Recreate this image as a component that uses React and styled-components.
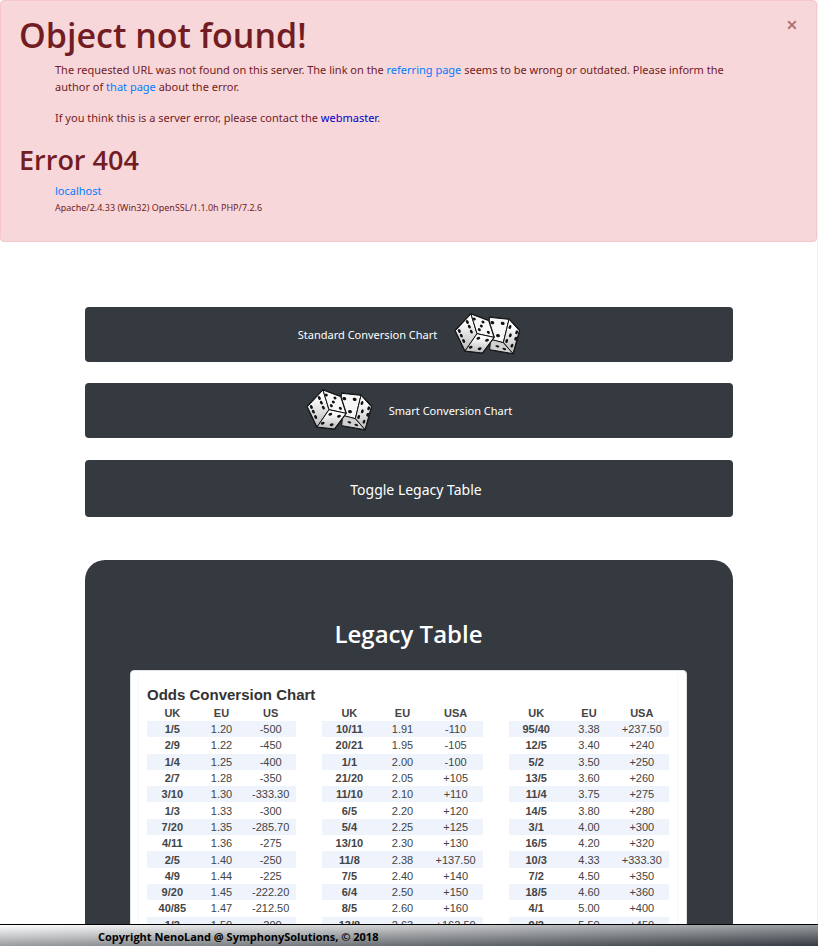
import React, { useState } from "react";
import styled, { createGlobalStyle, css } from "styled-components";

const headingFont = css`
  font-family: "Open Sans", "Noto Sans", sans-serif;
  font-weight: 600;
`;

const GlobalStyle = createGlobalStyle`
  *, *::before, *::after { box-sizing: border-box; }
  html { scrollbar-width: none; }
  body {
    margin: 0;
    background: #fff;
    color: #212529;
    font: 11px/17px "Noto Sans", "Open Sans", sans-serif;
  }
  button { font: inherit; color: inherit; cursor: pointer; }
`;

const Page = styled.div`
  border-right: 1px solid #f1f1f1;
  padding-bottom: 22px;
`;

const Alert = styled.section`
  position: relative;
  padding: 12px 64px 24px 18px;
  background: #f8d7da;
  border: 1px solid #f5c6cb;
  border-radius: 4px;
  color: #721c24;
`;

const AlertTitle = styled.h1`
  ${headingFont}
  margin: 0;
  font-size: 34px;
  line-height: 44px;
`;

const AlertSubtitle = styled.h2`
  ${headingFont}
  margin: 16px 0 4px;
  font-size: 27px;
  line-height: 36px;
`;

const AlertText = styled.p`
  margin: ${(p) => (p.$spaced ? "14px" : "4px")} 0 0;
  padding-left: 36px;
`;

const Signature = styled.small`
  display: block;
  padding-left: 36px;
  font-size: 9px;
  line-height: 18px;
`;

const Link = styled.a`
  color: ${(p) => (p.$dark ? "#0000cd" : "#007bff")};
  text-decoration: none;
`;

const CloseButton = styled.button`
  position: absolute;
  top: 11px;
  right: 11px;
  width: 26px;
  height: 26px;
  padding: 0;
  border: 0;
  background: none;
  color: #721c24;
  opacity: 0.55;
  font-size: 20px;
  font-weight: 600;
  line-height: 24px;
`;

const Container = styled.main`
  margin: 65px 84px 0 85px;
`;

const bar = css`
  display: flex;
  align-items: center;
  justify-content: center;
  width: 100%;
  border: 0;
  border-radius: 4px;
  background: #343a40;
  color: #fff;
`;

const ButtonStack = styled.div`
  display: grid;
  gap: 21px;
  margin-bottom: 22px;
`;

const ChartButton = styled.button`
  ${bar}
  height: 55px;
  gap: 17px;
  padding-bottom: 2px;
  flex-direction: ${(p) => (p.$iconFirst ? "row-reverse" : "row")};
`;

const ToggleButton = styled.button`
  ${bar}
  height: 57px;
  padding: 2px 0 0 14px;
  font-size: 14px;
`;

const DiceSvg = styled.svg`
  width: 66px;
  height: 44px;
  flex: none;
`;

const Panel = styled.section`
  margin-top: 43px;
  padding: 56px 46px 46px 45px;
  border-radius: 20px;
  background: #343a40;
`;

const PanelTitle = styled.h2`
  ${headingFont}
  margin: 0 0 18px;
  color: #fff;
  font-size: 24px;
  line-height: 36px;
  text-align: center;
`;

const Sheet = styled.div`
  padding: 4px 8px 4px 7px;
  border: 1px solid #dee2e6;
  border-radius: 4px;
  background: #fff;
`;

const SheetBody = styled.div`
  padding: 10px 8px 16px;
  border: solid #f7f7f7;
  border-width: 0 1px;
  color: #444;
  font-family: "Liberation Sans", Arial, sans-serif;
`;

const SheetTitle = styled.h3`
  margin: 0;
  color: #333;
  font-size: 15px;
  font-weight: 700;
  line-height: 20px;
`;

const Columns = styled.div`
  display: grid;
  grid-template-columns: 149fr 161fr 160fr;
  gap: 26px;
`;

const OddsTable = styled.table`
  width: 100%;
  height: 228px;
  border-collapse: collapse;
  table-layout: fixed;
  font-size: 11px;
  line-height: 16px;
  text-align: center;

  th, td { padding: 0; }
  tbody tr:nth-child(odd) { background: #eef3fc; }
`;

const Footer = styled.footer`
  position: fixed;
  inset: auto 0 0 0;
  height: 22px;
  padding-left: 98px;
  border-top: 1px solid #000;
  background: linear-gradient(to bottom right, #fff, #343a40);
  color: #000;
  font-family: "Open Sans", "Noto Sans", sans-serif;
  font-weight: 700;
  line-height: 23px;
`;

const TABLES = [
  {
    head: ["UK", "EU", "US"],
    rows: [
      ["1/5", "1.20", "-500"], ["2/9", "1.22", "-450"], ["1/4", "1.25", "-400"],
      ["2/7", "1.28", "-350"], ["3/10", "1.30", "-333.30"], ["1/3", "1.33", "-300"],
      ["7/20", "1.35", "-285.70"], ["4/11", "1.36", "-275"], ["2/5", "1.40", "-250"],
      ["4/9", "1.44", "-225"], ["9/20", "1.45", "-222.20"], ["40/85", "1.47", "-212.50"],
      ["1/2", "1.50", "-200"],
    ],
  },
  {
    head: ["UK", "EU", "USA"],
    rows: [
      ["10/11", "1.91", "-110"], ["20/21", "1.95", "-105"], ["1/1", "2.00", "-100"],
      ["21/20", "2.05", "+105"], ["11/10", "2.10", "+110"], ["6/5", "2.20", "+120"],
      ["5/4", "2.25", "+125"], ["13/10", "2.30", "+130"], ["11/8", "2.38", "+137.50"],
      ["7/5", "2.40", "+140"], ["6/4", "2.50", "+150"], ["8/5", "2.60", "+160"],
      ["13/8", "2.63", "+162.50"],
    ],
  },
  {
    head: ["UK", "EU", "USA"],
    rows: [
      ["95/40", "3.38", "+237.50"], ["12/5", "3.40", "+240"], ["5/2", "3.50", "+250"],
      ["13/5", "3.60", "+260"], ["11/4", "3.75", "+275"], ["14/5", "3.80", "+280"],
      ["3/1", "4.00", "+300"], ["16/5", "4.20", "+320"], ["10/3", "4.33", "+333.30"],
      ["7/2", "4.50", "+350"], ["18/5", "4.60", "+360"], ["4/1", "5.00", "+400"],
      ["9/2", "5.50", "+450"],
    ],
  },
];

/* Each pip: centre x, centre y, rotation in degrees, horizontal and vertical radius. */
const BACK_PIPS = [
  [130, 44, 10, 6, 5], [161, 46, 10, 6, 5], [147, 83, 10, 6, 5],
  [183, 57, 110, 6, 4], [203, 73, 110, 6, 4], [184, 82, 110, 6, 4],
  [173, 99, 110, 6, 4], [200, 92, 110, 6, 4], [189, 113, 110, 6, 4],
  [145, 115, 15, 6, 3], [166, 123, 15, 6, 3],
];

const FRONT_PIPS = [
  [55, 42, 60, 6, 4], [61, 56, 60, 6, 4], [67, 71, 60, 6, 4],
  [31, 69, 60, 6, 4], [37, 83, 60, 6, 4], [44, 99, 60, 6, 4],
  [76, 33, 40, 5, 4], [102, 42, 40, 5, 4], [97, 54, 40, 5, 4],
  [91, 65, 40, 5, 4], [118, 73, 40, 5, 4],
  [88, 91, -20, 6, 4], [114, 97, -20, 6, 4], [65, 118, -20, 6, 4], [92, 122, -20, 6, 4],
];

function Pips({ items }) {
  return items.map(([x, y, r, rx, ry]) => (
    <ellipse key={`${x}-${y}`} cx={x} cy={y} rx={rx} ry={ry} fill="#111" stroke="none" transform={`rotate(${r} ${x} ${y})`} />
  ));
}

function Dice() {
  return (
    <DiceSvg viewBox="15 12 198 132" aria-hidden="true">
      <defs>
        <linearGradient id="dice-face" x1="0" y1="0" x2="0" y2="1">
          <stop offset="0.2" stopColor="#fff" />
          <stop offset="1" stopColor="#b8b8b8" />
        </linearGradient>
      </defs>
      <g stroke="#111" strokeWidth="3" strokeLinejoin="round">
        <path d="M122 28L180 34L211 68L192 137L125 125Z" fill="#111" strokeWidth="5" />
        <path d="M122 28L180 34L163 104L112 92Z" fill="#f6f6f6" />
        <path d="M180 34L211 68L192 137L163 104Z" fill="url(#dice-face)" />
        <path d="M125 94L163 104L192 137L122 125Z" fill="#d0d0d0" />
        <Pips items={BACK_PIPS} />
        <path d="M66 18L119 38L135 88L100 135L48 129L19 68Z" fill="#111" strokeWidth="5" />
        <path d="M66 18L84 77L48 129L19 68Z" fill="url(#dice-face)" />
        <path d="M66 18L119 38L135 88L84 77Z" fill="#f8f8f8" />
        <path d="M84 77L135 88L100 135L48 129Z" fill="url(#dice-face)" />
        <Pips items={FRONT_PIPS} />
      </g>
    </DiceSvg>
  );
}

function Odds({ head, rows }) {
  return (
    <OddsTable>
      <colgroup>
        <col width="34%" />
        <col width="32%" />
        <col width="34%" />
      </colgroup>
      <thead>
        <tr>{head.map((h) => <th key={h} scope="col">{h}</th>)}</tr>
      </thead>
      <tbody>
        {rows.map(([uk, eu, us]) => (
          <tr key={uk}>
            <th scope="row">{uk}</th>
            <td>{eu}</td>
            <td>{us}</td>
          </tr>
        ))}
      </tbody>
    </OddsTable>
  );
}

export default function App() {
  const [alertOpen, setAlertOpen] = useState(true);
  const [tableOpen, setTableOpen] = useState(true);
  return (
    <>
      <GlobalStyle />
      <Page>
        {alertOpen && (
          <Alert role="alert">
            <CloseButton type="button" aria-label="Close" onClick={() => setAlertOpen(false)}>×</CloseButton>
            <AlertTitle>Object not found!</AlertTitle>
            <AlertText>
              The requested URL was not found on this server. The link on the{" "}
              <Link href="#referrer">referring page</Link> seems to be wrong or outdated. Please inform the
              author of <Link href="#page">that page</Link> about the error.
            </AlertText>
            <AlertText $spaced>
              If you think this is a server error, please contact the{" "}
              <Link $dark href="mailto:postmaster@localhost">webmaster</Link>.
            </AlertText>
            <AlertSubtitle>Error 404</AlertSubtitle>
            <AlertText><Link href="/">localhost</Link></AlertText>
            <Signature>Apache/2.4.33 (Win32) OpenSSL/1.1.0h PHP/7.2.6</Signature>
          </Alert>
        )}
        <Container>
          <ButtonStack>
            <ChartButton type="button">Standard Conversion Chart<Dice /></ChartButton>
            <ChartButton type="button" $iconFirst>Smart Conversion Chart<Dice /></ChartButton>
          </ButtonStack>
          <ToggleButton type="button" onClick={() => setTableOpen(!tableOpen)}>Toggle Legacy Table</ToggleButton>
          {tableOpen && (
            <Panel>
              <PanelTitle>Legacy Table</PanelTitle>
              <Sheet>
                <SheetBody>
                  <SheetTitle>Odds Conversion Chart</SheetTitle>
                  <Columns>
                    {TABLES.map((t) => <Odds key={t.rows[0][0]} {...t} />)}
                  </Columns>
                </SheetBody>
              </Sheet>
            </Panel>
          )}
        </Container>
      </Page>
      <Footer>Copyright NenoLand @ SymphonySolutions, © 2018</Footer>
    </>
  );
}
